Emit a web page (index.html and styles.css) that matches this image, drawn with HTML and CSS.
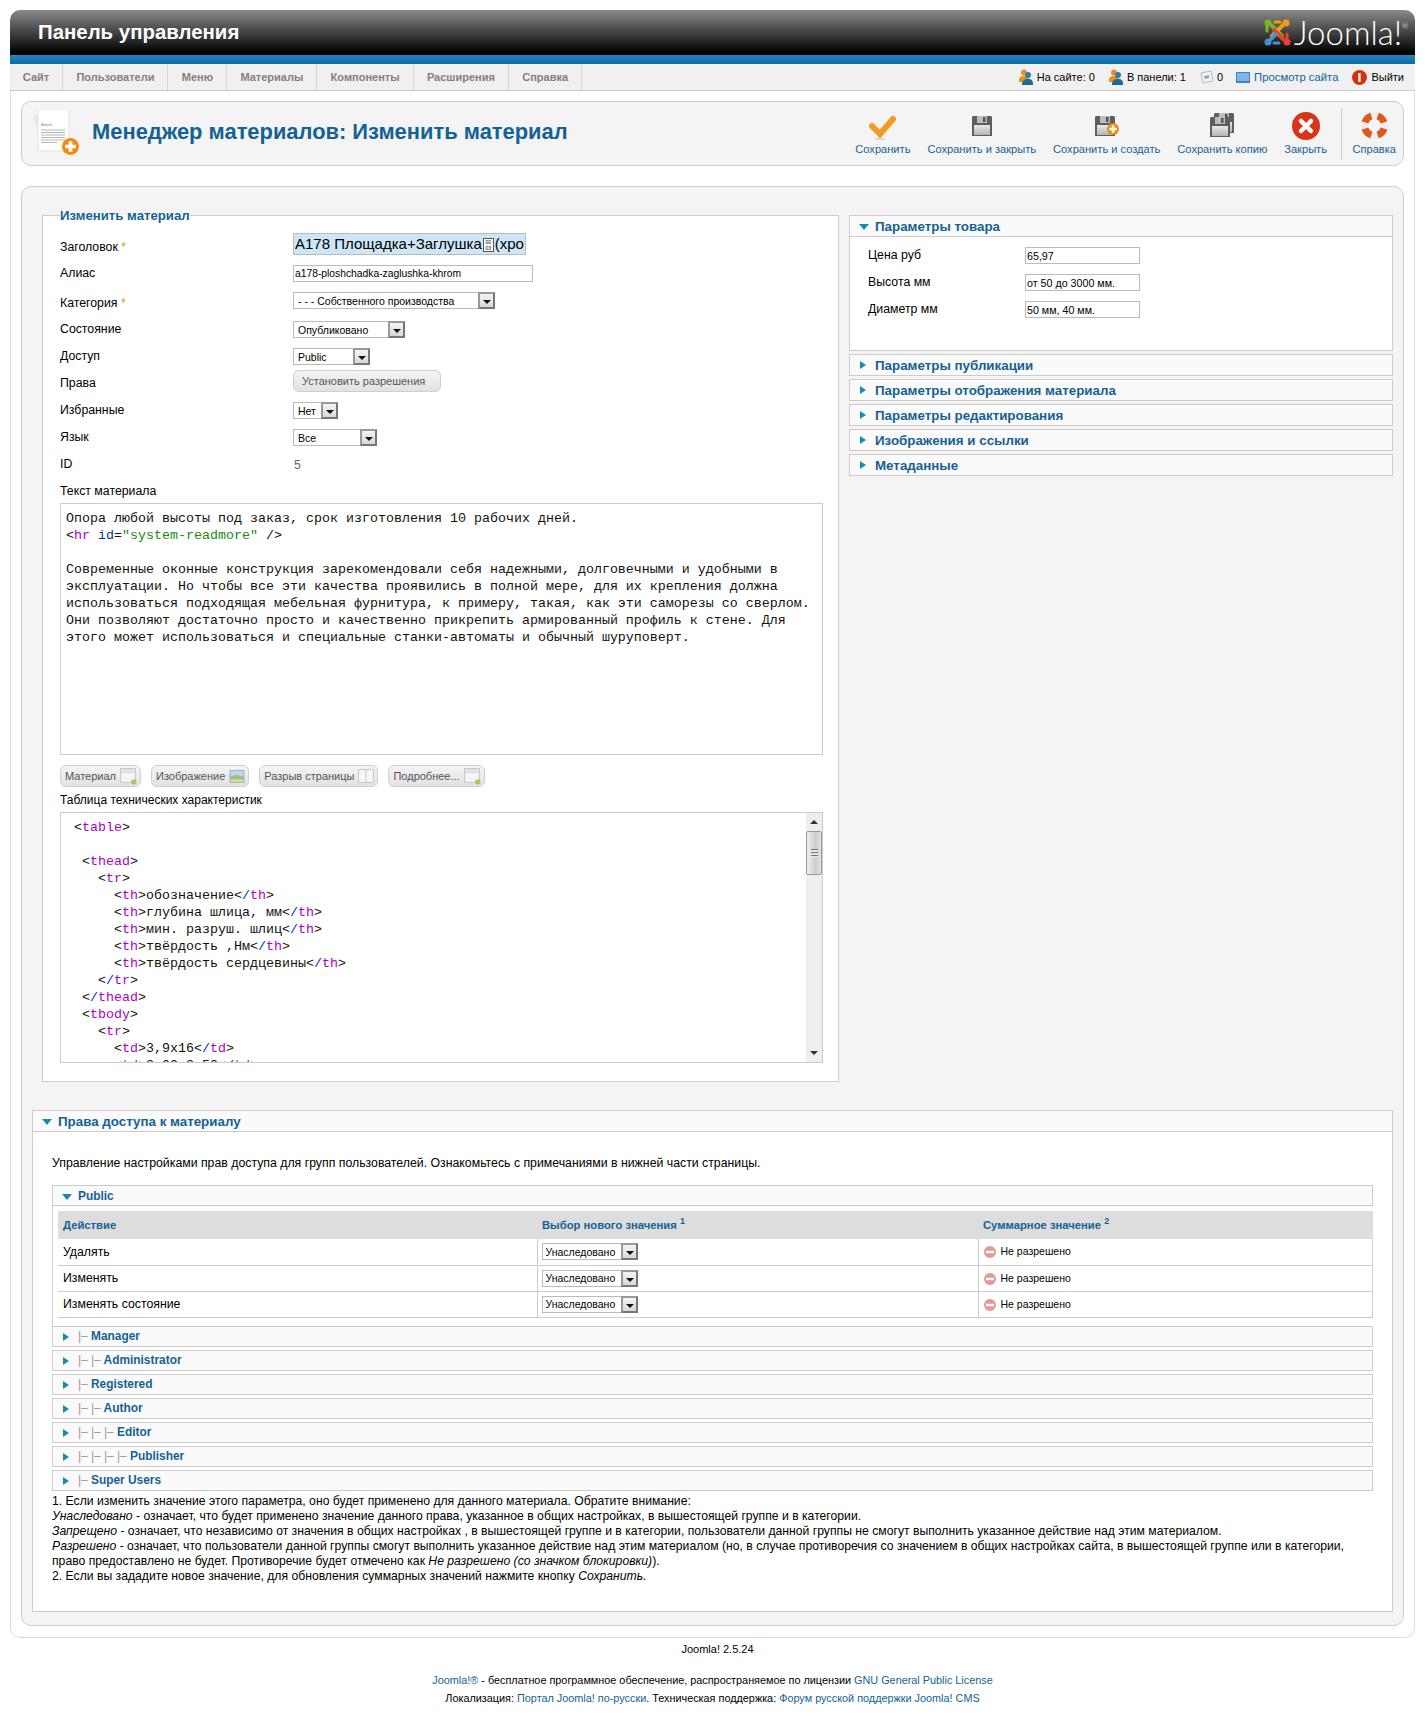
FILE: index.html
```html
<!doctype html>
<html lang="ru">
    <head>
    <meta charset="utf-8">
    <title>Менеджер материалов: Изменить материал</title>
    <link rel="stylesheet" href="styles.css">
    </head>

    <body>
        <svg class="defs" width="0" height="0">
            <defs>
                <linearGradient id="g-disk" x1="0" y1="0" x2="0" y2="1">
                    <stop offset="0" stop-color="#e8e8e8"/>
                    <stop offset="1" stop-color="#b4b4b4"/>
                </linearGradient>
            </defs>
            <symbol id="i-person" viewBox="0 0 14 16">
                <circle cx="5" cy="3.500" r="3" fill="#f08c1e"/>
                <path d="M0 11c0-3 2-4 5-4s5 1 5 4v2H0z" fill="#f08c1e"/>
                <circle cx="9" cy="6" r="3" fill="#2a7fa8"/>
                <path d="M3 15c0-3 2-5 6-5s5 2 5 5v1H3z" fill="#1d6a8f"/>
            </symbol>
            <symbol id="i-disk" viewBox="0 0 20 20">
                <path d="M1 0h18l1 1v19H0V1z" fill="#5e5e5e"/>
                <path d="M5 0h10v7H5z" fill="#bdbdbd"/>
                <path d="M11 1h2.500v5H11z" fill="#555"/>
                <path d="M2 9h16v10H2z" fill="url(#g-disk)"/>
            </symbol>
            <symbol id="i-plus" viewBox="0 0 12 12">
                <circle cx="6" cy="6" r="6" fill="#f08a12"/>
                <path d="M4.700 2.300h2.600v2.400h2.400v2.600H7.300v2.400H4.700V7.300H2.300V4.700h2.400z" fill="#fff"/>
            </symbol>
            <symbol id="i-block" viewBox="0 0 16 16">
                <rect x=".5" y=".5" width="14" height="13" fill="#f6f6f6" stroke="#c8c8c8"/>
                <path d="M1 1h13v4H1z" fill="#e2e2e2"/>
                <circle cx="13" cy="13" r="2.500" fill="#9ccb6a"/>
            </symbol>
            <symbol id="i-deny" viewBox="0 0 12 12">
                <circle cx="6" cy="6" r="6" fill="#e39a97"/>
                <path d="M2 4.800h8v2.400H2z" fill="#fff"/>
            </symbol>
        </svg>

        <div id="page">
            <div id="header">
                <h1 class="admin-title">Панель управления</h1>
                <div class="logo">
                    <svg class="logo-mark" width="30" height="30" viewBox="0 0 30 30" fill="none" stroke-width="4" stroke-linecap="round">
                        <path d="M9 8l11 11" stroke="#7ab51d"/>
                        <circle cx="6" cy="6" r="3.500" fill="#7ab51d"/>
                        <path d="M5 8v6" stroke="#7ab51d" stroke-width="3"/>
                        <path d="M21 8L10 19" stroke="#f49a1a"/>
                        <circle cx="24" cy="6" r="3.500" fill="#f49a1a"/>
                        <path d="M18 5h-5" stroke="#f49a1a" stroke-width="3"/>
                        <path d="M21 22L12 13" stroke="#e8412f"/>
                        <circle cx="25" cy="25" r="3.500" fill="#e8412f"/>
                        <path d="M25 22v-5" stroke="#e8412f" stroke-width="3"/>
                        <path d="M9 22l5-5" stroke="#4a8fd0"/>
                        <circle cx="6" cy="25" r="3.500" fill="#4a8fd0"/>
                        <path d="M12 26h5" stroke="#4a8fd0" stroke-width="3"/>
                    </svg>
                    <span class="logo-text">Joomla!<sup>®</sup></span>
                </div>
            </div>
            <div id="stripe"></div>
            <div id="subMenu">
                <ul class="nav">
                    <li>Сайт</li>
                    <li>Пользователи</li>
                    <li>Меню</li>
                    <li>Материалы</li>
                    <li>Компоненты</li>
                    <li>Расширения</li>
                    <li>Справка</li>
                </ul>
                <div class="status">
                    <span class="stat"><svg width="14" height="16"><use href="#i-person"/></svg>На сайте: 0</span>
                    <span class="stat"><svg width="14" height="16"><use href="#i-person"/></svg>В панели: 1</span>
                    <span class="stat stat-mail">
                        <svg width="14" height="14" viewBox="0 0 14 14"><path d="M1 3l10-2 2 10-10 2z" fill="#f2f2f2" stroke="#bbb"/><path d="M4 6l5-1 0 3-4 1z" fill="#8aa9bf"/></svg>0
                    </span>
                    <a class="stat stat-view link" href="#"><svg width="14" height="11" viewBox="0 0 14 11"><path d="M0 0h14v11H0z" fill="#3f86c9"/><path d="M1 1h12v8H1z" fill="#7db7e8"/></svg>Просмотр сайта</a>
                    <span class="stat"><svg width="15" height="15" viewBox="0 0 15 15"><circle cx="7.500" cy="7.500" r="7.500" fill="#d8300f"/><path d="M6.300 3h2.400v9H6.300z" fill="#fff"/></svg>Выйти</span>
                </div>
            </div>

            <div id="content">
                <div class="toolbar-box">
                    <svg class="page-icon" width="46" height="46" viewBox="0 0 46 46">
                        <path d="M0 7l12-3 14 36-14 3z" fill="#e6e6e6"/>
                        <path d="M5 0h31v42H5z" fill="#fff" stroke="#e2e2e2"/>
                        <text class="page-icon-text" x="8" y="17">Article</text>
                        <path d="M8 21h24M8 23.500h24M8 26h24M8 28.500h24M8 31h24M8 33.500h16" stroke="#b5b5b5"/>
                        <use href="#i-plus" x="29" y="29" width="17" height="17"/>
                    </svg>
                    <h2 class="page-title">Менеджер материалов: Изменить материал</h2>
                    <ul class="toolbar">
                        <li class="tool tool-save">
                            <svg width="27" height="25" viewBox="0 0 27 25">
                                <path d="M3 11l8 8 13-15" fill="none" stroke="#f29a27" stroke-width="6" stroke-linecap="round"/>
                                <path d="M6 24h10" stroke="#ccc" stroke-width="1.500"/>
                            </svg>
                            <span>Сохранить</span>
                        </li>
                        <li class="tool tool-disk">
                            <svg width="20" height="20"><use href="#i-disk"/></svg>
                            <span>Сохранить и закрыть</span>
                        </li>
                        <li class="tool tool-disk">
                            <svg width="24" height="20" viewBox="0 0 24 20">
                                <use href="#i-disk" width="20" height="20"/>
                                <use href="#i-plus" x="12" y="7" width="12" height="12"/>
                            </svg>
                            <span>Сохранить и создать</span>
                        </li>
                        <li class="tool tool-copy">
                            <svg width="24" height="24" viewBox="0 0 24 24">
                                <use href="#i-disk" x="4" width="20" height="20"/>
                                <use href="#i-disk" y="4" width="20" height="20"/>
                            </svg>
                            <span>Сохранить копию</span>
                        </li>
                        <li class="tool tool-close">
                            <svg width="28" height="28" viewBox="0 0 28 28">
                                <circle cx="14" cy="14" r="14" fill="#d9331a"/>
                                <path d="M9 9l10 10M19 9L9 19" stroke="#fff" stroke-width="4.500" stroke-linecap="round"/>
                            </svg>
                            <span>Закрыть</span>
                        </li>
                        <li class="tool tool-help">
                            <svg width="27" height="27" viewBox="0 0 27 27" fill="none">
                                <circle cx="13.500" cy="13.500" r="10" stroke="#eee" stroke-width="7"/>
                                <path d="M9 4.500a10 10 0 0 1 9 0M9 22.500a10 10 0 0 0 9 0M4.500 9a10 10 0 0 0 0 9M22.500 9a10 10 0 0 1 0 9" stroke="#e0591c" stroke-width="7" transform="rotate(45 13.500 13.500)"/>
                            </svg>
                            <span>Справка</span>
                        </li>
                    </ul>
                </div>

                <div class="main-box">
                    <div class="columns">
                        <fieldset class="edit-form">
                            <legend>Изменить материал</legend>
                            <div class="row row-title">
                                <label>Заголовок <em>*</em></label>
                                <div class="title-input">А178 Площадка+Заглушка<span class="tofu">00<br>03</span>(хро</div>
                            </div>
                            <div class="row">
                                <label>Алиас</label>
                                <input class="txt txt-alias" type="text" value="a178-ploshchadka-zaglushka-khrom">
                            </div>
                            <div class="row row-low row-wide">
                                <label>Категория <em>*</em></label>
                                <div class="slct slct-cat"><span>- - - Собственного производства</span><i></i></div>
                            </div>
                            <div class="row">
                                <label>Состояние</label>
                                <div class="slct slct-state"><span>Опубликовано</span><i></i></div>
                            </div>
                            <div class="row row-tight">
                                <label>Доступ</label>
                                <div class="slct slct-access"><span>Public</span><i></i></div>
                            </div>
                            <div class="row row-perm">
                                <label>Права</label>
                                <div class="btn btn-perm">Установить разрешения</div>
                            </div>
                            <div class="row">
                                <label>Избранные</label>
                                <div class="slct slct-feat"><span>Нет</span><i></i></div>
                            </div>
                            <div class="row">
                                <label>Язык</label>
                                <div class="slct slct-lang"><span>Все</span><i></i></div>
                            </div>
                            <div class="row">
                                <label>ID</label>
                                <span class="readonly">5</span>
                            </div>
                            <div class="editor-label">Текст материала</div>
<pre class="editor">Опора любой высоты под заказ, срок изготовления 10 рабочих дней.
&lt;<b>hr</b> <u>id</u>=<s>"system-readmore"</s> /&gt;

Современные оконные конструкция зарекомендовали себя надежными, долговечными и удобными в
эксплуатации. Но чтобы все эти качества проявились в полной мере, для их крепления должна
использоваться подходящая мебельная фурнитура, к примеру, такая, как эти саморезы со сверлом.
Они позволяют достаточно просто и качественно прикрепить армированный профиль к стене. Для
этого может использоваться и специальные станки-автоматы и обычный шуруповерт.</pre>
                            <div class="editor-btns">
                                <div class="btn btn-ins">Материал<svg width="17" height="17"><use href="#i-block"/></svg></div>
                                <div class="btn btn-ins">Изображение
                                    <svg width="16" height="13" viewBox="0 0 16 14"><path d="M0 0h16v14H0z" fill="#8fb3c9"/><path d="M1 1h14v6H1z" fill="#bcd7e6"/><path d="M1 7l7-2 7 3v2H1z" fill="#9cc27a"/><path d="M1 10h14v3H1z" fill="#e6d98e"/></svg>
                                </div>
                                <div class="btn btn-ins">Разрыв страницы
                                    <svg width="16" height="14" viewBox="0 0 16 14"><path d="M.5.500h15v13H.5z" fill="#f6f6f6" stroke="#c8c8c8"/><path d="M8 1v12" stroke="#c8c8c8"/></svg>
                                </div>
                                <div class="btn btn-ins">Подробнее...<svg width="17" height="17"><use href="#i-block"/></svg></div>
                            </div>
                            <div class="editor-label editor-label-2">Таблица технических характеристик</div>
                            <div class="code-box">
<pre class="code"> &lt;<b>table</b>&gt;

  &lt;<b>thead</b>&gt;
    &lt;<b>tr</b>&gt;
      &lt;<b>th</b>&gt;обозначение&lt;<u>/</u><b>th</b>&gt;
      &lt;<b>th</b>&gt;глубина шлица, мм&lt;<u>/</u><b>th</b>&gt;
      &lt;<b>th</b>&gt;мин. разруш. шлиц&lt;<u>/</u><b>th</b>&gt;
      &lt;<b>th</b>&gt;твёрдость ,Нм&lt;<u>/</u><b>th</b>&gt;
      &lt;<b>th</b>&gt;твёрдость сердцевины&lt;<u>/</u><b>th</b>&gt;
    &lt;<u>/</u><b>tr</b>&gt;
  &lt;<u>/</u><b>thead</b>&gt;
  &lt;<b>tbody</b>&gt;
    &lt;<b>tr</b>&gt;
      &lt;<b>td</b>&gt;3,9x16&lt;<u>/</u><b>td</b>&gt;
      &lt;<b>td</b>&gt;2,00-2,50&lt;<u>/</u><b>td</b>&gt;</pre>
                                <div class="scroll">
                                    <div class="scroll-up"></div>
                                    <div class="scroll-thumb"><i></i></div>
                                    <div class="scroll-down"></div>
                                </div>
                            </div>
                        </fieldset>

                        <div class="side">
                            <h3 class="pane-head open">Параметры товара</h3>
                            <div class="pane-body">
                                <div class="param"><label>Цена руб</label><input class="txt txt-param" type="text" value="65,97"></div>
                                <div class="param"><label>Высота мм</label><input class="txt txt-param" type="text" value="от 50 до 3000 мм."></div>
                                <div class="param"><label>Диаметр мм</label><input class="txt txt-param" type="text" value="50 мм, 40 мм."></div>
                            </div>
                            <h3 class="pane-head">Параметры публикации</h3>
                            <h3 class="pane-head">Параметры отображения материала</h3>
                            <h3 class="pane-head">Параметры редактирования</h3>
                            <h3 class="pane-head">Изображения и ссылки</h3>
                            <h3 class="pane-head">Метаданные</h3>
                        </div>
                    </div>

                    <div class="rights">
                        <h3 class="pane-head open">Права доступа к материалу</h3>
                        <div class="rights-body">
                            <p class="rights-desc">Управление настройками прав доступа для групп пользователей. Ознакомьтесь с примечаниями в нижней части страницы.</p>

                            <h4 class="group-head open">Public</h4>
                            <div class="group-body">
                                <table class="acl">
                                    <thead>
                                        <tr>
                                            <th class="col-action">Действие</th>
                                            <th class="col-new">Выбор нового значения <sup>1</sup></th>
                                            <th class="col-calc">Суммарное значение <sup>2</sup></th>
                                        </tr>
                                    </thead>
                                    <tbody>
                                        <tr>
                                            <td>Удалять</td>
                                            <td><div class="slct slct-acl"><span>Унаследовано</span><i></i></div></td>
                                            <td class="denied"><svg width="12" height="12"><use href="#i-deny"/></svg>Не разрешено</td>
                                        </tr>
                                        <tr>
                                            <td>Изменять</td>
                                            <td><div class="slct slct-acl"><span>Унаследовано</span><i></i></div></td>
                                            <td class="denied"><svg width="12" height="12"><use href="#i-deny"/></svg>Не разрешено</td>
                                        </tr>
                                        <tr>
                                            <td>Изменять состояние</td>
                                            <td><div class="slct slct-acl"><span>Унаследовано</span><i></i></div></td>
                                            <td class="denied"><svg width="12" height="12"><use href="#i-deny"/></svg>Не разрешено</td>
                                        </tr>
                                    </tbody>
                                </table>
                            </div>

                            <h4 class="group-head"><span class="lvl">|–</span> Manager</h4>
                            <h4 class="group-head"><span class="lvl">|– |–</span> Administrator</h4>
                            <h4 class="group-head"><span class="lvl">|–</span> Registered</h4>
                            <h4 class="group-head"><span class="lvl">|– |–</span> Author</h4>
                            <h4 class="group-head"><span class="lvl">|– |– |–</span> Editor</h4>
                            <h4 class="group-head"><span class="lvl">|– |– |– |–</span> Publisher</h4>
                            <h4 class="group-head"><span class="lvl">|–</span> Super Users</h4>

                            <div class="notes">
                                1. Если изменить значение этого параметра, оно будет применено для данного материала. Обратите внимание:<br>
                                <em>Унаследовано</em> - означает, что будет применено значение данного права, указанное в общих настройках, в вышестоящей группе и в категории.<br>
                                <em>Запрещено</em> - означает, что независимо от значения в общих настройках , в вышестоящей группе и в категории, пользователи данной группы не смогут выполнить указанное действие над этим материалом.<br>
                                <em>Разрешено</em> - означает, что пользователи данной группы смогут выполнить указанное действие над этим материалом (но, в случае противоречия со значением в общих настройках сайта, в вышестоящей группе или в категории, право предоставлено не будет. Противоречие будет отмечено как <em>Не разрешено (со значком блокировки)</em>).<br>
                                2. Если вы зададите новое значение, для обновления суммарных значений нажмите кнопку <em>Сохранить.</em>
                            </div>
                        </div>
                    </div>
                </div>
            </div>

            <div id="footer">
                <p class="version">Joomla! 2.5.24</p>
                <p><a class="link" href="#">Joomla!®</a> - бесплатное программное обеспечение, распространяемое по лицензии <a class="link" href="#">GNU General Public License</a></p>
                <p>Локализация: <a class="link" href="#">Портал Joomla! по-русски</a>. Техническая поддержка: <a class="link" href="#">Форум русской поддержки Joomla! CMS</a></p>
            </div>
        </div>
    </body>
</html>
```

FILE: styles.css
```css
body {
    margin: 0;
    padding-top: 10px;
    background: #fff;
    color: #000;
    font-family: "Liberation Sans", Arial, sans-serif;
    font-size: 12.300px;
}
ul {
    list-style: none;
    margin: 0;
    padding: 0;
}
h1, h2, h3, h4, p {
    margin: 0;
}
.defs {
    position: absolute;
}
.link {
    color: #146295;
    text-decoration: none;
}

#page {
    margin: 0 10px;
}

/* top bar */
#header {
    height: 45px;
    display: flex;
    justify-content: space-between;
    background: linear-gradient(#8a8a8a, #000 96%);
    border-radius: 10px 10px 0 0;
}
.admin-title {
    padding: 10px 0 0 28px;
    color: #fff;
    font-size: 20.400px;
    line-height: 24px;
    font-weight: bold;
}
.logo {
    display: flex;
    align-items: flex-start;
    padding: 7px 7px 0 0;
}
.logo-text {
    color: #fff;
    font-family: Lato, sans-serif;
    font-weight: 300;
    font-size: 33px;
    line-height: 30px;
    margin-left: 2px;
}
.logo-text sup {
    font-size: 7px;
    vertical-align: 16px;
    line-height: 0;
}
#stripe {
    height: 9px;
    background: linear-gradient(#2088bd, #0a6a9f);
}
#subMenu {
    height: 26px;
    display: flex;
    justify-content: space-between;
    background: #f0f0f0;
    border-bottom: 1px solid #ccc;
}
.nav {
    display: flex;
    margin-left: -.5px;
}
.nav li {
    padding: 0 13px 0 13.300px;
    line-height: 26px;
    font-size: 11px;
    font-weight: bold;
    color: #808080;
    border-right: 1px solid #d4d4d4;
}
.status {
    display: flex;
    align-items: center;
    padding-right: 11px;
    font-size: 11px;
}
.stat {
    display: flex;
    align-items: center;
    gap: 4px;
    margin-left: 14px;
}
.stat-mail {
    gap: 3px;
}
.stat-view {
    margin-left: 13px;
    font-size: 11.300px;
}

/* content area */
#content {
    padding: 10px 10px 11px 10px;
    border: 1px solid #ddd;
    border-top: 0;
    border-radius: 0 0 10px 10px;
}
.toolbar-box {
    height: 63px;
    display: flex;
    align-items: center;
    padding-left: 11px;
    background: #f4f4f4;
    border: 1px solid #ccc;
    border-radius: 10px;
}
.page-icon {
    flex: none;
    margin-top: -4px;
}
.page-icon-text {
    font-size: 4px;
    fill: #777;
}
.page-title {
    margin: -4px 0 0 13px;
    color: #146295;
    font-size: 21.900px;
    font-weight: bold;
}
.toolbar {
    display: flex;
    align-items: stretch;
    margin-left: auto;
    height: 52px;
}
.tool {
    display: flex;
    flex-direction: column;
    align-items: center;
    justify-content: flex-end;
    padding: 0 8.500px;
    color: #146295;
    font-size: 11.100px;
}
.tool svg {
    margin-bottom: auto;
    margin-top: 4px;
}
.tool-save svg {
    margin-top: 7px;
}
.tool-disk svg {
    margin-top: 8px;
}
.tool-copy svg {
    margin-top: 5px;
}
.tool span {
    line-height: 14px;
    margin-bottom: 4px;
}
.tool-help {
    padding: 0 7px 0 10px;
    margin-left: 6px;
    border-left: 1px solid #ccc;
}

.main-box {
    margin-top: 20px;
    padding: 21px 10px 13px 10px;
    background: #f4f4f4;
    border: 1px solid #ccc;
    border-radius: 10px;
}
.columns {
    display: flex;
    gap: 10px;
    margin-left: 10px;
    padding-top: 8px;
}

/* left form */
.edit-form {
    box-sizing: border-box;
    width: 797px;
    flex: none;
    margin: -8px 0 0 0;
    padding: 10px 14px 18px 17px;
    background: #fff;
    border: 1px solid #ccc;
}
.edit-form legend {
    padding: 0;
    color: #146295;
    font-size: 13.200px;
    line-height: 15px;
    font-weight: bold;
}
.row {
    display: flex;
    align-items: center;
    min-height: 17px;
    margin-bottom: 10px;
}
.row label {
    width: 233px;
    flex: none;
    padding-bottom: 2px;
}
.row em {
    color: #f08a12;
    font-style: normal;
}
.row-title label, .row-low label {
    padding: 5px 0 0 0;
}
.row-perm label {
    padding: 4px 0 0 0;
}
.row-low {
    height: 17px;
}
.row-wide {
    margin-bottom: 12px;
}
.row-tight {
    margin-bottom: 5px;
}
.title-input {
    box-sizing: border-box;
    width: 233px;
    height: 22px;
    padding-left: 1px;
    overflow: hidden;
    white-space: nowrap;
    background: #cde6f7;
    border: 1px solid #bbb;
    font-size: 15px;
    line-height: 20px;
}
.tofu {
    display: inline-block;
    width: 11px;
    height: 14px;
    margin: 0 1px 0 1px;
    vertical-align: -1px;
    background: #fff;
    border: 1px solid #555;
    box-sizing: border-box;
    font-size: 5px;
    line-height: 6px;
    text-align: center;
}
.txt {
    box-sizing: border-box;
    height: 17px;
    padding: 0 0 0 1px;
    margin: 0;
    background: #fff;
    border: 1px solid #bbb;
    color: #000;
    font-family: "Liberation Sans", Arial, sans-serif;
    font-size: 10.700px;
    border-radius: 0;
    outline: none;
}
.txt-alias {
    width: 240px;
    font-size: 10.300px;
}
.txt-param {
    width: 115px;
}
.readonly {
    color: #666;
    padding-left: 1px;
}

/* select look */
.slct {
    box-sizing: border-box;
    height: 17px;
    display: flex;
    align-items: center;
    justify-content: space-between;
    border: 1px solid #bbb;
    background: #fff;
    font-size: 10.500px;
}
.slct span {
    padding-left: 4px;
}
.slct i {
    box-sizing: border-box;
    position: relative;
    flex: none;
    width: 17px;
    height: 17px;
    margin: -1px -1px -1px 0;
    background: linear-gradient(#f4f4f4, #d8d8d8);
    border: 2px solid #a8a8a8;
    border-color: #999 #777 #777 #999;
}
.slct i::after {
    content: "";
    position: absolute;
    left: 3px;
    top: 6px;
    border: 4px solid transparent;
    border-top-color: #111;
    border-bottom: 0;
}
.slct-cat { width: 202px; }
.slct-state { width: 112px; }
.slct-access { width: 77px; }
.slct-feat { width: 45px; }
.slct-lang { width: 84px; }
.slct-acl { width: 96px; }
.slct-acl span { padding-left: 3px; }

.btn {
    box-sizing: border-box;
    height: 22px;
    display: flex;
    align-items: center;
    background: linear-gradient(#f4f4f4, #e2e2e2);
    border: 1px solid #cfcfcf;
    border-radius: 6px;
    color: #555;
    font-size: 11px;
}
.btn-perm {
    width: 148px;
    padding-left: 8px;
}
.editor-label {
    padding-top: 1px;
    line-height: 15px;
}
.editor-label-2 {
    padding-top: 0;
    font-size: 12px;
}
.editor, .code {
    margin: 0;
    font-family: "Liberation Mono", "Courier New", monospace;
    font-size: 13.330px;
    line-height: 17px;
    color: #111;
}
.editor {
    box-sizing: border-box;
    width: 763px;
    height: 252px;
    margin-top: 4px;
    padding: 6px 5px;
    border: 1px solid #ccc;
    overflow: hidden;
    white-space: pre;
}
.editor b, .code b {
    color: #a0c;
    font-weight: normal;
}
.editor u, .code u {
    color: #03a;
    text-decoration: none;
}
.editor s {
    color: #281;
    text-decoration: none;
}
.editor-btns {
    display: flex;
    gap: 10px;
    margin: 10px 0 6px 0;
}
.btn-ins {
    gap: 4px;
    padding: 0 3px 0 4px;
}
.code-box {
    box-sizing: border-box;
    width: 763px;
    height: 251px;
    display: flex;
    margin-top: 4px;
    border: 1px solid #ccc;
    overflow: hidden;
}
.code {
    flex: 1;
    padding: 6px 5px;
    overflow: hidden;
}
.scroll {
    flex: none;
    width: 16px;
    display: flex;
    flex-direction: column;
    background: #eee;
}
.scroll-up, .scroll-down {
    height: 18px;
    display: flex;
    align-items: center;
    justify-content: center;
}
.scroll-up::after, .scroll-down::after {
    content: "";
    border: 4px solid transparent;
}
.scroll-up::after {
    border-bottom-color: #333;
    border-top: 0;
}
.scroll-down {
    margin-top: auto;
}
.scroll-down::after {
    border-top-color: #333;
    border-bottom: 0;
}
.scroll-thumb {
    box-sizing: border-box;
    height: 44px;
    display: flex;
    align-items: center;
    justify-content: center;
    background: linear-gradient(90deg, #f1f1f1, #ccc 60%, #e4e4e4);
    border: 1px solid #999;
    border-radius: 2px;
}
.scroll-thumb i {
    width: 7px;
    height: 8px;
    background: repeating-linear-gradient(#777 0 1px, #e8e8e8 1px 3px);
}

/* right column */
.side {
    flex: 1;
    min-width: 0;
    margin-top: -1px;
}
.pane-head {
    box-sizing: border-box;
    position: relative;
    height: 22px;
    margin-bottom: 3px;
    padding-left: 25px;
    background: #fafafa;
    border: 1px solid #ccc;
    color: #146295;
    font-size: 13.350px;
    line-height: 22px;
    font-weight: bold;
}
.pane-head::before, .group-head::before {
    content: "";
    position: absolute;
    left: 10px;
    top: 6px;
    border: 4px solid transparent;
    border-left: 6px solid #1a8ab5;
    border-right: 0;
}
.pane-head.open, .group-head.open {
    margin-bottom: 0;
}
.pane-head.open::before, .group-head.open::before {
    left: 9px;
    top: 8px;
    border: 5px solid transparent;
    border-top: 6px solid #1a8ab5;
    border-bottom: 0;
}
.pane-body {
    box-sizing: border-box;
    height: 114px;
    margin-bottom: 3px;
    padding: 10px 0 0 18px;
    background: #fff;
    border: 1px solid #ccc;
    border-top: 0;
}
.param {
    display: flex;
    align-items: center;
    margin-bottom: 10px;
}
.param label {
    width: 157px;
    padding-bottom: 2px;
}

/* permissions */
.rights {
    margin-top: 28px;
}
.rights-body {
    padding: 24px 19px 27px 19px;
    background: #fff;
    border: 1px solid #ccc;
    border-top: 0;
}
.rights-desc {
    line-height: 15px;
    margin-bottom: 14px;
}
.group-head {
    box-sizing: border-box;
    position: relative;
    height: 21px;
    margin-bottom: 3px;
    padding-left: 25px;
    background: #fafafa;
    border: 1px solid #ccc;
    color: #146295;
    font-size: 11.900px;
    line-height: 19px;
    font-weight: bold;
}
.group-head.open {
    line-height: 21px;
}
.lvl {
    color: #999;
    font-weight: normal;
}
.group-body {
    padding: 5px 0 8px 5px;
    border-left: 1px solid #ccc;
}
.acl {
    width: 100%;
    border-collapse: collapse;
    table-layout: fixed;
}
.acl th {
    height: 28px;
    padding: 0 0 0 5px;
    background: #ddd;
    color: #146295;
    font-size: 11.250px;
    text-align: left;
}
.acl sup {
    font-size: 9px;
    line-height: 0;
}
.col-action { width: 474px; }
.col-new { width: 436px; }
.col-calc { padding-left: 4px; }
.acl td {
    height: 26px;
    box-sizing: border-box;
    padding: 0 0 0 5px;
    border: 1px solid #ccc;
    border-width: 0 1px 1px 1px;
}
.acl td:first-child {
    border-left: 0;
}
.acl td:nth-child(2) {
    padding-left: 4px;
}
.denied {
    font-size: 10.500px;
}
.denied svg {
    margin-right: 5px;
    vertical-align: -3px;
}
.notes {
    font-size: 12.200px;
    line-height: 15px;
}
.notes em {
    font-style: italic;
}

#footer {
    padding-top: 2px;
    text-align: center;
    font-size: 10.850px;
}
#footer p {
    line-height: 18px;
}
#footer .version {
    margin-bottom: 13px;
    padding-left: 10px;
    font-size: 11px;
}
```
